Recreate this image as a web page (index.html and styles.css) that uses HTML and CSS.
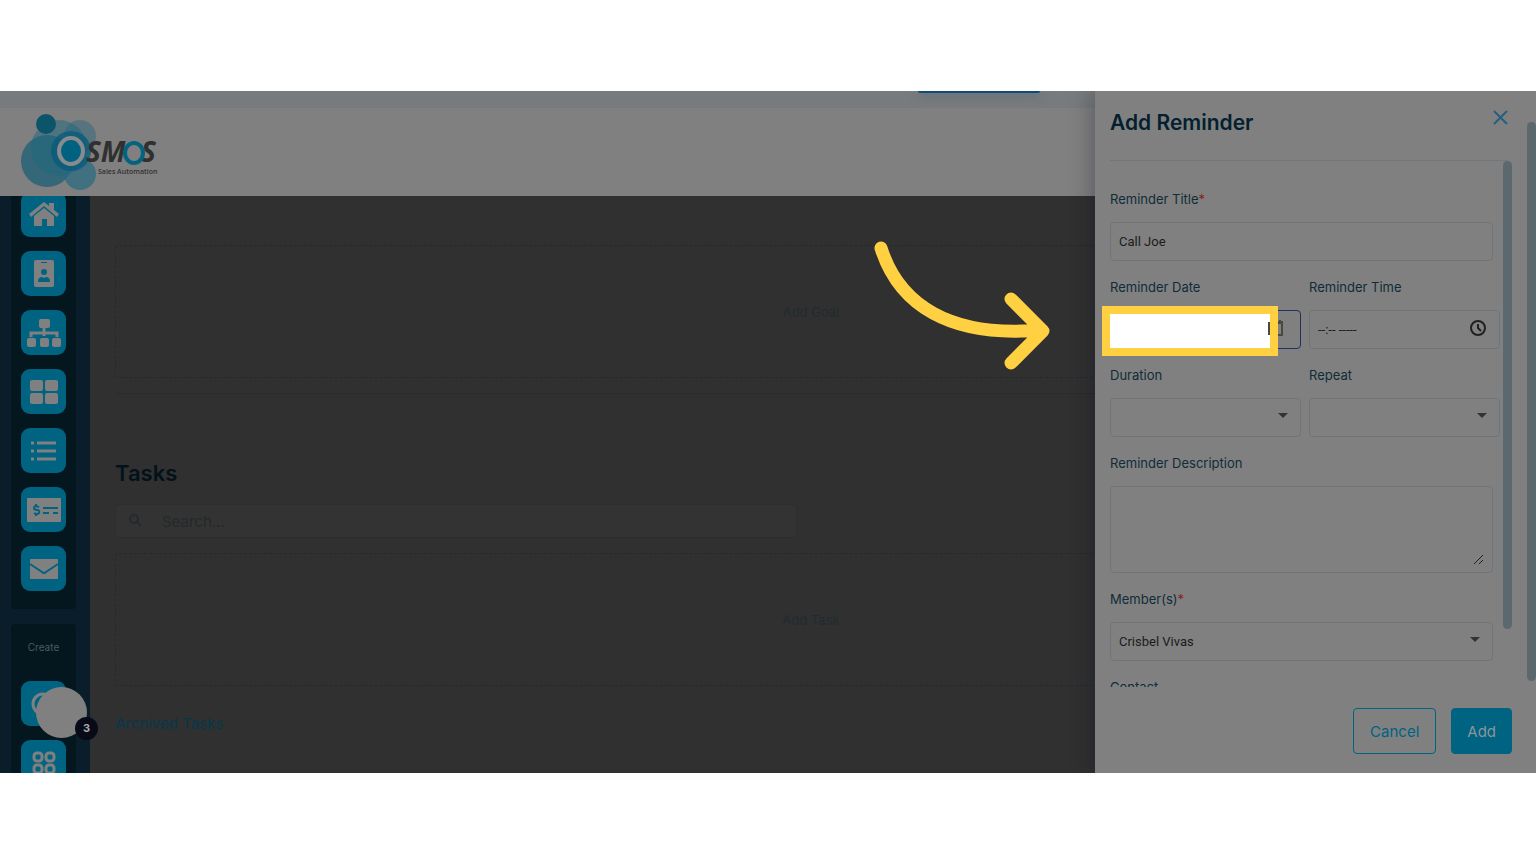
FILE: index.html
```
<!DOCTYPE html>
<html lang="en">
<head>
    <meta charset="utf-8">
    <title>Add Reminder</title>
    <link rel="stylesheet" href="styles.css">
</head>
<body>
    <div class="screen">
        <div class="top-strip"><span class="top-tab"></span></div>

        <header class="header">
            <svg class="logo" width="140" height="80" viewBox="20 112 140 80" role="img" aria-label="Osmos Sales Automation">
                <circle cx="80" cy="136" r="16" fill="#466f7e" opacity=".7"/>
                <circle cx="47" cy="161" r="26" fill="#276376" opacity=".85"/>
                <circle cx="59" cy="148" r="28" fill="#1d6880" opacity=".5"/>
                <circle cx="80" cy="174" r="16" fill="#276a80" opacity=".7"/>
                <circle cx="46" cy="124" r="10" fill="#0c5469"/>
                <circle cx="71" cy="151" r="20" fill="#075a7b" opacity=".75"/>
                <ellipse cx="71" cy="151" rx="12" ry="13" fill="#006180" stroke="#868b8d" stroke-width="4"/>
                <text class="logo-name" x="86" y="162">SM</text>
                <text class="logo-name" x="141" y="162">S</text>
                <ellipse cx="134" cy="153" rx="9" ry="10" fill="#808080" stroke="#046480" stroke-width="4"/>
                <text class="logo-sub" x="98" y="174">Sales Automation</text>
            </svg>
        </header>

        <div class="content">
            <nav class="sidebar">
                <div class="nav-group nav-first">
                    <button class="nav-button" aria-label="Home">
                        <svg width="32" height="32" viewBox="0 0 32 32"><path d="M1 15 16 3l5 4V4h5v7l5 4-2 3L16 7 3 18z"/><path d="m16 9 10 8v10h-7v-7h-5v7H6V17z"/></svg>
                    </button>
                    <button class="nav-button" aria-label="Contacts">
                        <svg width="32" height="32" viewBox="0 0 32 32"><rect x="6" y="2" width="20" height="27" rx="2"/><path class="cut" d="M13 4h6v1h-6zM10 24q0-5 4-5l2 1 2-1q4 0 4 5z"/><circle class="cut" cx="16" cy="14" r="3"/></svg>
                    </button>
                    <button class="nav-button" aria-label="Organization">
                        <svg width="36" height="32" viewBox="0 0 36 32"><rect x="13" y="2" width="11" height="9" rx="2"/><rect x="1" y="21" width="9" height="9" rx="2"/><rect x="14" y="21" width="9" height="9" rx="2"/><rect x="26" y="21" width="9" height="9" rx="2"/><path class="line" d="M18 10v9M5 20v-4h26v4"/></svg>
                    </button>
                    <button class="nav-button" aria-label="Dashboard">
                        <svg width="32" height="32" viewBox="0 0 32 32"><rect x="2" y="4" width="13" height="11" rx="2"/><rect x="17" y="4" width="13" height="11" rx="2"/><rect x="2" y="17" width="13" height="11" rx="2"/><rect x="17" y="17" width="13" height="11" rx="2"/></svg>
                    </button>
                    <button class="nav-button" aria-label="List">
                        <svg width="32" height="32" viewBox="0 0 32 32"><path class="line" d="M9 8h19M9 16h19M9 24h19M3 8h3M3 16h3M3 24h3"/></svg>
                    </button>
                    <button class="nav-button" aria-label="Payments">
                        <svg width="36" height="32" viewBox="0 0 36 32"><rect x="1" y="4" width="34" height="24" rx="1"/><path class="cut-line" d="M17 14h15M17 19h6M27 19h5M13 13q-5-2-5 1 0 2 3 2t2 3q-2 2-5 0M10 10v2M10 20v2"/></svg>
                    </button>
                    <button class="nav-button" aria-label="Mail">
                        <svg width="32" height="32" viewBox="0 0 32 32"><rect x="2" y="6" width="28" height="20" rx="1"/><path class="cut-line" d="m2 11 12 8q2 2 4 0l12-8"/></svg>
                    </button>
                </div>
                <div class="nav-group nav-create">
                    <span class="nav-label">Create</span>
                    <button class="nav-button" aria-label="Create new">
                        <svg width="32" height="32" viewBox="0 0 32 32"><circle class="line" cx="15" cy="16" r="10"/></svg>
                    </button>
                    <button class="nav-button" aria-label="Apps">
                        <svg width="32" height="32" viewBox="0 0 32 32"><g class="line"><rect x="6" y="6" width="8" height="8" rx="3"/><rect x="18" y="6" width="8" height="8" rx="3"/><rect x="6" y="18" width="8" height="8" rx="3"/><rect x="18" y="18" width="8" height="8" rx="3"/></g></svg>
                    </button>
                </div>
            </nav>

            <main class="main">
                <div class="empty-box">Add Goal</div>
                <hr class="divider">
                <h2 class="section-title">Tasks</h2>
                <div class="search">
                    <svg width="16" height="16" viewBox="0 0 16 16"><circle cx="6" cy="6" r="4"/><path d="m9 9 4 4"/></svg>
                    <input type="search" placeholder="Search..." aria-label="Search tasks">
                </div>
                <div class="empty-box">Add Task</div>
                <a class="archived" href="#">Archived Tasks</a>
            </main>
        </div>

        <div class="bubble"><span class="bubble-count">3</span></div>

        <aside class="drawer">
            <div class="drawer-head">
                <h1>Add Reminder</h1>
                <button class="close" aria-label="Close">
                    <svg width="15" height="15" viewBox="0 0 15 15"><path d="m1 1 13 13M14 1 1 14"/></svg>
                </button>
            </div>

            <form class="drawer-form" id="reminder">
                <div class="field">
                    <label for="title">Reminder Title<span class="required">*</span></label>
                    <input class="control" type="text" id="title" value="Call Joe">
                </div>
                <div class="field-row">
                    <div class="field">
                        <label for="date">Reminder Date</label>
                        <div class="control-wrap">
                            <input class="control date" type="date" id="date">
                            <div class="highlight"></div>
                            <svg class="date-icon" width="16" height="18" viewBox="0 0 16 18"><path d="M1 3v13M10 3h4v13h-4M10 4h4M12 1v2"/></svg>
                        </div>
                    </div>
                    <div class="field">
                        <label for="time">Reminder Time</label>
                        <div class="control-wrap">
                            <input class="control" type="text" id="time" placeholder="--:-- -----">
                            <svg class="time-icon" width="18" height="18" viewBox="0 0 18 18"><circle cx="9" cy="9" r="7"/><path d="M9 5v4l3 3"/></svg>
                        </div>
                    </div>
                </div>
                <div class="field-row">
                    <div class="field">
                        <label for="duration">Duration</label>
                        <div class="control-wrap">
                            <select class="control" id="duration"><option></option></select>
                            <svg class="caret" width="10" height="5" viewBox="0 0 10 5"><path d="M0 0h10L5 5z"/></svg>
                        </div>
                    </div>
                    <div class="field">
                        <label for="repeat">Repeat</label>
                        <div class="control-wrap">
                            <select class="control" id="repeat"><option></option></select>
                            <svg class="caret" width="10" height="5" viewBox="0 0 10 5"><path d="M0 0h10L5 5z"/></svg>
                        </div>
                    </div>
                </div>
                <div class="field">
                    <label for="description">Reminder Description</label>
                    <div class="control-wrap">
                        <textarea class="control" id="description"></textarea>
                        <svg class="grip" width="9" height="9" viewBox="0 0 9 9"><path d="m0 9 9-9M5 9l4-4"/></svg>
                    </div>
                </div>
                <div class="field">
                    <label for="members">Member(s)<span class="required">*</span></label>
                    <div class="control-wrap">
                        <select class="control" id="members"><option>Crisbel Vivas</option></select>
                        <svg class="caret" width="10" height="5" viewBox="0 0 10 5"><path d="M0 0h10L5 5z"/></svg>
                    </div>
                </div>
                <div class="field">
                    <label for="contact">Contact</label>
                    <input class="control" type="text" id="contact">
                </div>
            </form>

            <div class="drawer-foot">
                <button class="button cancel" type="button">Cancel</button>
                <button class="button add" type="submit" form="reminder">Add</button>
            </div>

            <span class="scrollbar form-scrollbar"></span>
            <span class="scrollbar page-scrollbar"></span>
            <svg class="arrow" width="185" height="140" viewBox="870 235 185 140"><path d="M881 248C899 305 950 338 1040 330M1011 299l32 32-32 32"/></svg>
        </aside>
    </div>
</body>
</html>
```
FILE: styles.css
```
* {
    box-sizing: border-box;
}

body {
    margin: 0;
    background: #fff;
    font-family: Inter, "Open Sans", sans-serif;
    font-size: 13px;
}

button,
input,
select,
textarea {
    font-family: inherit;
}

.screen {
    position: relative;
    display: flex;
    flex-direction: column;
    height: calc(100vh - 182px);
    margin: 91px 0;
    overflow: hidden;
    background: #303030;
}

.top-strip {
    display: flex;
    justify-content: flex-end;
    height: 17px;
    flex: none;
    padding-right: 496px;
    background: #787b7d;
}

.top-tab {
    width: 122px;
    height: 2px;
    border-radius: 0 0 4px 4px;
    background: #0d4b7a;
    box-shadow: 0 3px 8px rgba(20, 75, 115, .5);
}

.header {
    flex: none;
    height: 88px;
    padding: 4px 20px;
    background: #808080;
}

.logo {
    display: block;
}

.logo-name {
    fill: #303030;
    font: italic 700 28px "Open Sans", sans-serif;
}

.logo-sub {
    fill: #303030;
    font: 600 7px "Open Sans", sans-serif;
}

.content {
    display: flex;
    flex: 1;
    min-height: 0;
}

/* sidebar */
.sidebar {
    display: flex;
    flex-direction: column;
    gap: 15px;
    flex: none;
    width: 90px;
    padding: 0 14px 0 11px;
    overflow: hidden;
    background: #0a1d2b;
}

.nav-group {
    display: flex;
    flex-direction: column;
    align-items: center;
    gap: 14px;
    flex: none;
    padding-bottom: 18px;
    border-radius: 4px;
    background: #04171f;
}

.nav-first {
    margin-top: -4px;
}

.nav-create {
    padding-top: 15px;
}

.nav-label {
    margin-bottom: 12px;
    color: #4d5a61;
    font-size: 10px;
    line-height: 16px;
}

.nav-button {
    display: flex;
    align-items: center;
    justify-content: center;
    width: 45px;
    height: 45px;
    padding: 0;
    border: 0;
    border-radius: 9px;
    background: #006382;
    cursor: pointer;
}

.nav-button svg {
    fill: #808080;
}

.nav-button .line {
    fill: none;
    stroke: #808080;
    stroke-width: 3;
}

.nav-button .cut {
    fill: #006382;
}

.nav-button .cut-line {
    fill: none;
    stroke: #006382;
    stroke-width: 2;
}

/* goals and tasks */
.main {
    flex: 1;
    padding: 49px 29px 0 25px;
    color: #202b30;
}

.empty-box {
    display: flex;
    align-items: center;
    justify-content: center;
    height: 133px;
    border: 1px dashed #25292b;
    border-radius: 4px;
    color: #222b2f;
}

.divider {
    margin: 15px 0 0;
    border: 0;
    border-top: 1px solid #292b2c;
}

.section-title {
    margin: 64px 0 16px;
    color: #03121a;
    font-size: 22px;
    font-weight: 600;
    line-height: 30px;
}

.search {
    display: flex;
    align-items: center;
    gap: 18px;
    width: 49%;
    height: 34px;
    margin-bottom: 15px;
    padding: 0 12px;
    border: 1px solid #2b2f30;
    border-radius: 4px;
    background: #333;
}

.search svg {
    fill: none;
    stroke: #222b2f;
    stroke-width: 2;
}

.search input {
    flex: 1;
    padding: 0;
    border: 0;
    outline: 0;
    background: none;
    color: #222b2f;
    font-size: 15px;
}

.search input::placeholder {
    color: #24292b;
}

.archived {
    display: inline-block;
    margin-top: 27px;
    color: #06384c;
    font-size: 15px;
    line-height: 22px;
    text-decoration: none;
}

/* floating chat bubble */
.bubble {
    position: absolute;
    bottom: 35px;
    left: 36px;
    width: 51px;
    height: 51px;
    border-radius: 50%;
    background: #808080;
}

.bubble-count {
    position: absolute;
    right: -11px;
    bottom: -2px;
    width: 23px;
    height: 23px;
    border-radius: 50%;
    background: #080b17;
    color: #aaa;
    font-size: 11px;
    font-weight: 700;
    line-height: 23px;
    text-align: center;
}

/* reminder drawer */
.drawer {
    position: absolute;
    top: 0;
    right: 0;
    bottom: 0;
    display: flex;
    flex-direction: column;
    width: 441px;
    background: #808080;
    box-shadow: -4px 0 20px rgba(10, 15, 30, .3);
}

.drawer-head {
    display: flex;
    justify-content: space-between;
    flex: none;
    height: 70px;
    margin: 0 28px 0 15px;
    padding-top: 17px;
    border-bottom: 1px solid #71777a;
}

.drawer-head h1 {
    margin: 0;
    color: #04202e;
    font-size: 21px;
    font-weight: 600;
    line-height: 30px;
}

.close {
    height: 18px;
    padding: 1px 0;
    border: 0;
    background: none;
    cursor: pointer;
}

.close svg {
    display: block;
    fill: none;
    stroke: #265f80;
    stroke-width: 2;
}

.drawer-form {
    display: flex;
    flex-direction: column;
    gap: 16px;
    flex: 1;
    min-height: 0;
    padding: 28px 43px 0 15px;
    /* rows reach past the form's padding, so only the height is clipped */
    overflow: clip;
}

.field {
    flex: 1;
    min-width: 0;
}

.drawer-form > .field,
.field-row {
    flex: none;
}

.field-row {
    display: flex;
    gap: 8px;
    margin-right: -7px;
}

.field label {
    display: block;
    margin-bottom: 13px;
    color: #102c39;
    line-height: 20px;
}

.required {
    color: #8a2020;
}

.control-wrap {
    position: relative;
    display: grid;
}

.control-wrap > .control,
.control-wrap > svg {
    grid-area: 1 / 1;
}

.control {
    display: block;
    width: 100%;
    height: 39px;
    margin: 0;
    padding: 0 8px;
    border: 1px solid #707476;
    border-radius: 4px;
    outline: 0;
    background: #808080;
    color: #1b1b1b;
    font-family: Roboto, sans-serif;
    font-size: 13px;
    appearance: none;
}

.control::placeholder {
    color: #1b1b1b;
}

textarea.control {
    height: 87px;
    resize: none;
}

.date {
    border-color: #24305f;
    color: transparent;
}

.date::-webkit-calendar-picker-indicator {
    opacity: 0;
}

.date-icon,
.time-icon,
.grip {
    z-index: 1;
    justify-self: end;
    fill: none;
    stroke: #202020;
    pointer-events: none;
}

.date-icon {
    align-self: center;
    margin: 0 17px 4px 0;
    stroke: #4c4a40;
    stroke-width: 2;
}

.time-icon {
    align-self: center;
    margin: 0 13px 4px 0;
    stroke-width: 2;
}

.caret {
    justify-self: end;
    margin: 15px 13px 0 0;
    fill: #333;
    pointer-events: none;
}

.grip {
    align-self: end;
    margin: 0 10px 9px 0;
}

.highlight {
    position: absolute;
    top: -4px;
    right: 23px;
    left: -8px;
    height: 50px;
    border: 8px solid #ffd042;
    background: #fff;
    pointer-events: none;
}

.drawer-foot {
    display: flex;
    justify-content: flex-end;
    gap: 15px;
    flex: none;
    padding: 21px 24px 19px;
}

.button {
    height: 46px;
    padding: 0 15px;
    border: 1px solid #006382;
    border-radius: 4px;
    font-size: 15px;
    cursor: pointer;
}

.cancel {
    padding: 0 16px;
    background: none;
    color: #006382;
}

.add {
    background: #006382;
    color: #8a9699;
}

.scrollbar {
    position: absolute;
    width: 9px;
    border-radius: 5px;
    background: #5b686d;
}

.form-scrollbar {
    top: 70px;
    right: 24px;
    bottom: 144px;
}

.page-scrollbar {
    top: 31px;
    right: 0;
    bottom: 92px;
}

.arrow {
    position: absolute;
    top: 144px;
    left: -225px;
    fill: none;
    stroke: #ffd042;
    stroke-width: 13;
    stroke-linecap: round;
    stroke-linejoin: round;
    pointer-events: none;
}
```
